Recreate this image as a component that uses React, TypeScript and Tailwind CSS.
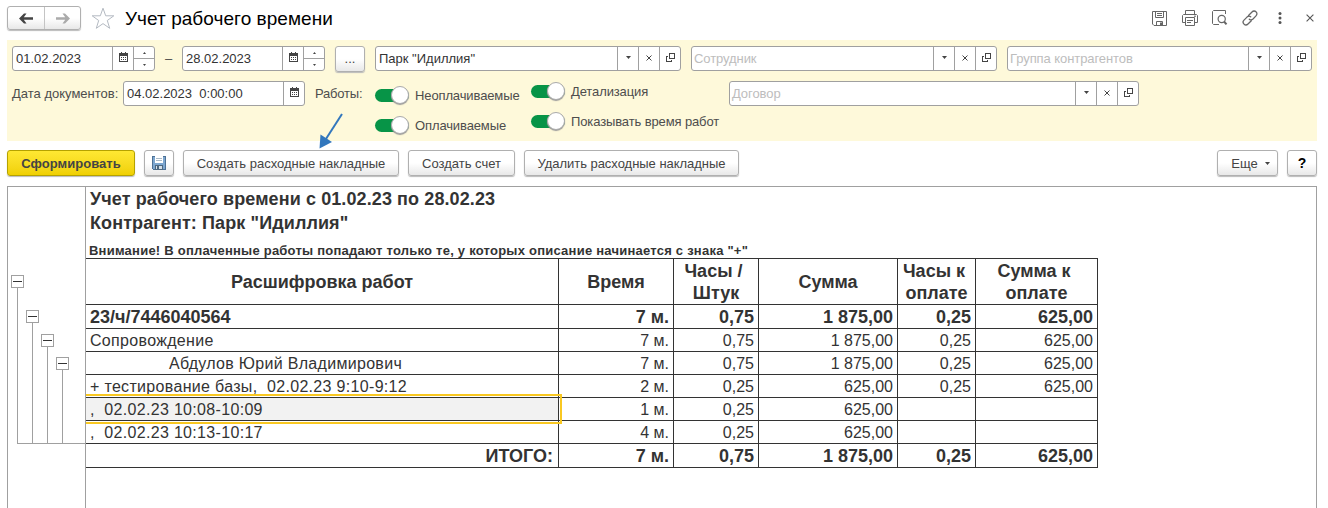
import React from 'react';

const Arrow = ({ flip = false, color }: { flip?: boolean; color: string }) => (
  <svg width="14" height="11" viewBox="0 0 14 11" className={flip ? 'rotate-180' : ''}>
    <path d="M0 5.5L5 0.5H7.5L4.8 4.2H14V6.8H4.8L7.5 10.5H5Z" fill={color} />
  </svg>
);

const Calendar = () => (
  <svg width="9" height="10" viewBox="0 0 9 10" shapeRendering="crispEdges">
    <path d="M0.5 1.5H8.5V9.5H0.5Z" fill="none" stroke="#444" />
    <path d="M0 1H9V4H0ZM2 0H3V2H2ZM6 0H7V2H6Z" fill="#444" />
    <path d="M2 5.5H7M2 7.5H7" stroke="#444" strokeDasharray="1 1" />
  </svg>
);

const Down = () => (
  <svg width="5" height="3" viewBox="0 0 5 3"><path d="M0 0H5L2.5 3Z" fill="#444" /></svg>
);

const Cross = () => (
  <svg width="6" height="6" viewBox="0 0 6 6"><path d="M0.5 0.5L5.5 5.5M5.5 0.5L0.5 5.5" stroke="#444" strokeWidth="1" /></svg>
);

const Open = () => (
  <svg width="9" height="9" viewBox="0 0 9 9" shapeRendering="crispEdges">
    <path d="M3.5 0.5H8.5V5.5H3.5ZM2 3.5H0.5V8.5H5.5V7" fill="none" stroke="#444" />
  </svg>
);

const fieldBase = 'flex h-[25px] shrink-0 overflow-hidden rounded-[3px] border border-[#a0a0a0] bg-white text-[13px] leading-[23px] text-[#333]';

const DateField = ({ value }: { value: string }) => (
  <div className={`${fieldBase} w-[143px]`}>
    <div className="w-[99px] pl-[3px]">{value}</div>
    <div className="flex w-[21px] justify-center border-l border-[#a0a0a0] pt-[5px]"><Calendar /></div>
    <div className="flex w-[21px] flex-col border-l border-[#a0a0a0]">
      <div className="flex h-[12px] items-center justify-center border-b border-[#a0a0a0]">
        <svg width="3" height="2" viewBox="0 0 3 2"><path d="M0 2H3L1.5 0Z" fill="#444" /></svg>
      </div>
      <div className="flex h-[11px] items-center justify-center">
        <svg width="3" height="2" viewBox="0 0 3 2"><path d="M0 0H3L1.5 2Z" fill="#444" /></svg>
      </div>
    </div>
  </div>
);

const Lookup = ({ width, text, muted = false }: { width: string; text: string; muted?: boolean }) => (
  <div className={`${fieldBase} ${width}`}>
    <div className={`flex-1 ${muted ? 'pl-[2px] tracking-[-0.08px] text-[#bdbdbd]' : 'pl-[3px]'}`}>{text}</div>
    <div className="flex w-[21px] items-center justify-center border-l border-[#a0a0a0] pb-[2px]"><Down /></div>
    <div className="flex w-[21px] items-center justify-center border-l border-[#a0a0a0] pb-[2px]"><Cross /></div>
    <div className="flex w-[21px] items-center justify-center border-l border-[#a0a0a0] pb-[2px]"><Open /></div>
  </div>
);

const Toggle = ({ label }: { label: string }) => (
  <div className="flex h-[20px] items-center">
    <div className="flex h-[13px] w-[34px] items-center rounded-full bg-[#079447]">
      <div className="ml-[16px] h-[18px] w-[18px] shrink-0 rounded-full border border-[#aaa] bg-white shadow-[0_1px_1px_#999]" />
    </div>
    <span className="ml-[6px] whitespace-nowrap pt-[2px] text-[13px] leading-[18px] tracking-[-0.12px] text-[#4d4d4d]">{label}</span>
  </div>
);

const btn = 'flex h-[26px] shrink-0 items-center justify-center whitespace-nowrap rounded-[3px] border border-[#b0b0b0] bg-linear-to-b from-white from-50% to-[#e8e8e8] text-[13px] text-[#444] shadow-[0_1px_1px_#bbb]';

const rows: { cells: string[]; bold?: boolean; indent?: boolean; selected?: boolean; total?: boolean }[] = [
  { cells: ['23/ч/7446040564', '7 м.', '0,75', '1 875,00', '0,25', '625,00'], bold: true },
  { cells: ['Сопровождение', '7 м.', '0,75', '1 875,00', '0,25', '625,00'] },
  { cells: ['Абдулов Юрий Владимирович', '7 м.', '0,75', '1 875,00', '0,25', '625,00'], indent: true },
  { cells: ['+ тестирование базы,\u00a0 02.02.23 9:10-9:12', '2 м.', '0,25', '625,00', '0,25', '625,00'] },
  { cells: [',\u00a0 02.02.23 10:08-10:09', '1 м.', '0,25', '625,00', '', ''], selected: true },
  { cells: [',\u00a0 02.02.23 10:13-10:17', '4 м.', '0,25', '625,00', '', ''] },
  { cells: ['ИТОГО:', '7 м.', '0,75', '1 875,00', '0,25', '625,00'], bold: true, total: true },
];

const gridCols = 'grid grid-cols-[473px_115px_85px_139px_78px_122px]';
const heads = ['Расшифровка работ', 'Время', 'Часы / \nШтук', 'Сумма', 'Часы к \nоплате', 'Сумма к \nоплате'];

const Tree = () => (
  <svg width="77" height="320" viewBox="8 187 77 320" shapeRendering="crispEdges" className="shrink-0">
    <path d="M17.5 288V443.5H85M32.5 323V443M47.5 347V443M62.5 370V443" fill="none" stroke="#a0a0a0" />
    {[[11, 275], [26, 310], [41, 334], [56, 357]].map(([x, y]) => (
      <g key={x}>
        <rect x={x + 0.5} y={y + 0.5} width="12" height="12" fill="#fff" stroke="#a0a0a0" />
        <path d={`M${x + 2} ${y + 6.5}h9`} stroke="#333" />
      </g>
    ))}
  </svg>
);

export default function App() {
  return (
    <div className="relative h-[508px] w-[1328px] overflow-hidden bg-white px-[7px] font-['Liberation_Sans',Arial,sans-serif]">
      <header className="flex h-[40px] items-start">
        <div className="mt-[6px] flex h-[24px] w-[74px] rounded-[3px] border border-[#b0b0b0] bg-linear-to-b from-white from-50% to-[#e8e8e8] shadow-[0_1px_1px_#bbb]">
          <div className="flex w-[37px] items-center justify-center border-r border-[#c4c4c4]"><Arrow color="#444" /></div>
          <div className="flex flex-1 items-center justify-center"><Arrow flip color="#ababab" /></div>
        </div>
        <svg className="ml-[10px] mt-[7px]" width="24" height="23" viewBox="0 0 24 23">
          <path d="M12 1.2L14.7 8.8H22.8L16.3 13.5L18.7 21.3L12 16.6L5.3 21.3L7.7 13.5L1.2 8.8H9.3Z" fill="none" stroke="#b4bac2" />
        </svg>
        <h1 className="ml-[10px] mt-[7px] whitespace-nowrap text-[19px] leading-[24px] tracking-[0.05px] text-black">Учет рабочего времени</h1>
        <div className="ml-auto flex h-[36px] items-center text-[#555]">
          <svg width="15" height="15" viewBox="0 0 15 15" fill="none" stroke="#666">
            <path d="M0.5 0.5H14.5V14.5H2L0.5 13ZM3.5 0.5V6.5H11.5V0.5M5 2.5H10M5 4.5H10M4.5 14V10.5H10.5V14" /><path d="M8 11.5H10V14H8Z" fill="#666" stroke="none" />
          </svg>
          <svg className="ml-[15px]" width="16" height="16" viewBox="0 0 16 16" fill="none" stroke="#666">
            <path d="M3.5 4V0.5H12.5V4M3.5 12.5H0.5V5.5L1.5 4.5H14.5L15.5 5.5V12.5H12.5M3.5 7.5H12.5V15.5H3.5ZM5 10.5H11M5 12.5H9M12 6.2H14" />
          </svg>
          <svg className="ml-[14px]" width="16" height="16" viewBox="0 0 16 16" fill="none" stroke="#666">
            <path d="M13.5 4V0.5H1.5L0.5 1.5V13.5L1.5 14.5H7" /><circle cx="9.7" cy="9" r="3.6" strokeWidth="1.2" /><path d="M12 11.5L14.5 14.3" strokeWidth="2" />
          </svg>
          <svg className="ml-[14px]" width="16" height="16" viewBox="0 0 16 16" fill="none" stroke="#666" strokeWidth="1.3" strokeLinecap="round">
            <path d="M6.5 5.5L10 2C11.2 0.8 12.8 0.6 14 1.8C15.3 3 15.2 4.7 14 5.9L11 9C9.8 10.1 8.4 10.1 7.3 9.2" />
            <path d="M9.3 10.7L6 14C4.8 15.2 3.2 15.3 2 14.1C0.8 12.9 0.8 11.3 2 10.1L5 7.1C6.2 6 7.7 5.9 8.7 6.8" />
          </svg>
          <svg className="ml-[20px]" width="4" height="12" viewBox="0 0 4 12" fill="#555"><circle cx="2" cy="1.6" r="1.5" /><circle cx="2" cy="6" r="1.5" /><circle cx="2" cy="10.4" r="1.5" /></svg>
          <svg className="ml-[24px] mr-[7px]" width="8" height="8" viewBox="0 0 8 8"><path d="M0.6 0.6L7.4 7.4M7.4 0.6L0.6 7.4" stroke="#555" strokeWidth="1.1" /></svg>
        </div>
      </header>

      <section className="h-[101px] w-[1310px] bg-[#fef9da] pl-[5px] pt-[6px]">
        <div className="flex">
          <DateField value="01.02.2023" />
          <span className="w-[27px] text-center text-[13px] leading-[25px] text-[#4d4d4d]">–</span>
          <DateField value="28.02.2023" />
          <button className={`${btn} ml-[10px] w-[30px]`}>...</button>
          <div className="ml-[10px] flex gap-[10px]">
            <Lookup width="w-[306px]" text={'Парк "Идиллия"'} />
            <Lookup width="w-[306px]" text="Сотрудник" muted />
            <Lookup width="w-[305px]" text="Группа контрагентов" muted />
          </div>
        </div>
        <div className="mt-[9px] flex items-start text-[13px] text-[#4d4d4d]">
          <span className="w-[111px] whitespace-nowrap leading-[25px]">Дата документов:</span>
          <div className={`${fieldBase} w-[182px]`}>
            <div className="w-[159px] whitespace-pre pl-[3px]">04.02.2023  0:00:00</div>
            <div className="flex flex-1 justify-center border-l border-[#a0a0a0] pt-[5px]"><Calendar /></div>
          </div>
          <span className="ml-[10px] w-[60px] leading-[25px] tracking-[-0.2px]">Работы:</span>
          <div className="mt-[4px] flex w-[156px] flex-col gap-[10px]">
            <Toggle label="Неоплачиваемые" /><Toggle label="Оплачиваемые" />
          </div>
          <div className="flex w-[198px] flex-col gap-[10px]">
            <Toggle label="Детализация" /><Toggle label="Показывать время работ" />
          </div>
          <Lookup width="w-[410px]" text="Договор" muted />
        </div>
      </section>

      <div className="flex h-[45px] w-[1310px] items-start gap-[9px] pt-[9px]">
        <button className="flex h-[26px] w-[128px] items-center justify-center rounded-[3px] border border-[#b5a200] bg-linear-to-b from-[#ffe832] to-[#f0d000] pt-px text-[13px] font-bold tracking-[0.05px] text-[#444] shadow-[0_1px_1px_#bbb]">Сформировать</button>
        <button className={`${btn} w-[30px]`}>
          <svg width="14" height="14" viewBox="0 0 14 14" shapeRendering="crispEdges">
            <path d="M0 0H14V14H1L0 13Z" fill="#4d7195" /><path d="M1 1H13V13H1Z" fill="#7da7d0" />
            <path d="M3 0H11V7H3Z" fill="#fff" /><path d="M4 2.5H10M4 4.5H10" stroke="#a9b9c6" />
            <path d="M3 9H11V14H3Z" fill="#4d6880" /><path d="M4 10H10V13H4Z" fill="#d6e0e8" /><path d="M5 10H7V13H5Z" fill="#4d6880" />
          </svg>
        </button>
        <button className={`${btn} w-[216px] pt-px`}>Создать расходные накладные</button>
        <button className={`${btn} w-[107px] pt-px`}>Создать счет</button>
        <button className={`${btn} w-[215px] pt-px tracking-[-0.03px]`}>Удалить расходные накладные</button>
        <button className={`${btn} ml-auto w-[61px] gap-[7px] pl-[6px] pt-px`}>Еще <Down /></button>
        <button className={`${btn} w-[30px] pt-px text-[14px] font-bold text-black`}>?</button>
      </div>

      <main className="flex h-[330px] w-[1310px] border border-[#a0a0a0]">
        <Tree />
        <div className="flex-1 border-l border-[#a0a0a0] text-[#333]">
          <h2 className="pl-[4px] text-[18px] font-bold leading-[24px] tracking-[0.1px]">Учет рабочего времени с 01.02.23 по 28.02.23</h2>
          <h2 className="pl-[4px] text-[18px] font-bold leading-[24px] tracking-[0.1px]">Контрагент: Парк "Идиллия"</h2>
          <p className="h-[23px] whitespace-nowrap pl-[3px] pt-[8px] text-[13px] font-bold leading-[15px] tracking-[0.235px]">Внимание! В оплаченные работы попадают только те, у которых описание начинается с знака "+"</p>
          <div className="w-[1012px] border-t border-[#333]">
            <div className={gridCols}>
              {heads.map((h) => (
                <div key={h} className="flex h-[46px] items-center justify-center whitespace-pre border-b border-r border-[#333] text-center text-[18px] font-bold leading-[22px]">{h}</div>
              ))}
            </div>
            {rows.map((r, i) => (
              <div key={i} className={`${gridCols} relative ${r.bold ? 'h-[24px] text-[18px] font-bold leading-[21px]' : 'h-[23px] text-[16px] leading-[20px]'}`}>
                {r.cells.map((c, j) => (
                  <div key={j} className={`whitespace-nowrap border-b border-r border-[#333] pt-[2px] ${j > 0 ? 'pr-[4px] text-right' : r.total ? 'pr-[5px] text-right' : r.indent ? 'pl-[83px] tracking-[0.3px]' : r.bold ? 'pl-[4px]' : 'pl-[4px] tracking-[0.32px]'} ${r.selected && j === 0 ? 'bg-[#f2f2f2]' : ''}`}>{c}</div>
                ))}
                {r.selected && <div className="absolute -top-[4px] left-0 z-10 h-[30px] w-[476px] border-y-2 border-r-2 border-[#f9c821]" />}
              </div>
            ))}
          </div>
        </div>
      </main>

      <svg className="absolute left-[316px] top-[110px]" width="30" height="42" viewBox="0 0 30 42">
        <path d="M26 4L8 32" stroke="#3277bd" strokeWidth="2" /><path d="M3.5 38.5L4.5 24.5L16 32Z" fill="#3277bd" />
      </svg>
    </div>
  );
}
